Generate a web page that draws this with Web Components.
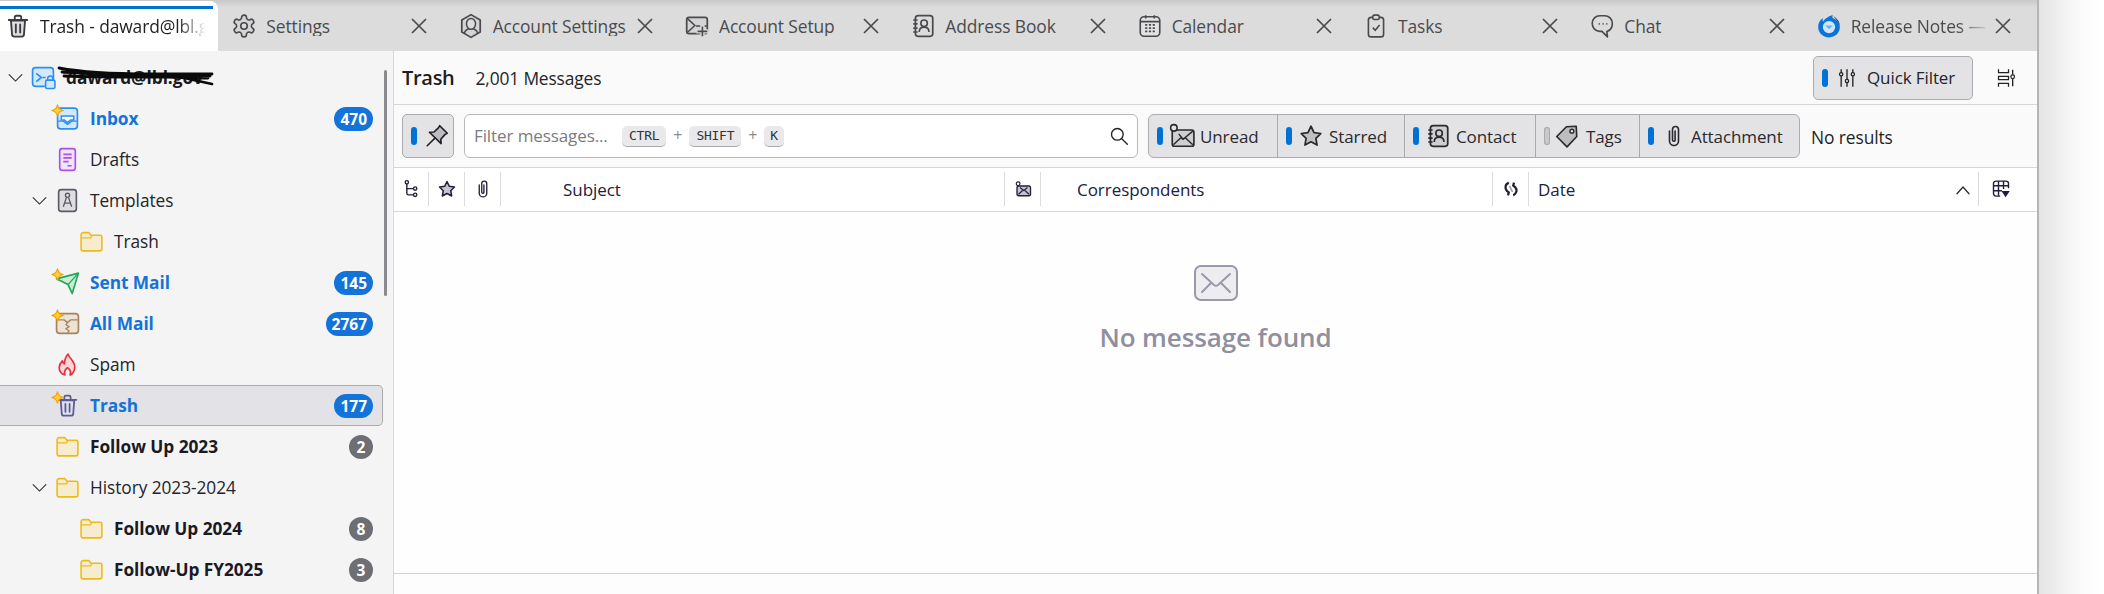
<!DOCTYPE html>
<html lang="en"><head><meta charset="utf-8"><title>Thunderbird</title>
<style>html,body{margin:0;height:100%;background:#fff;overflow:hidden}body{font:17px/1.2 "Open Sans","Noto Sans",sans-serif;color:#1a1a1f}</style>
</head><body><tb-app></tb-app>
<script>
const book=(s='#444',f='#e6e6e9')=>`<rect x="5" y="2.500" width="16" height="19" rx="2.500" fill="${f}" stroke="${s}" stroke-width="1.600"/><path d="M3 6.500h4M3 10h4M3 14h4M3 17.500h4" stroke="${s}" stroke-width="1.500"/><circle cx="13" cy="9.500" r="3" fill="none" stroke="${s}" stroke-width="1.500"/><path d="M8.500 17.500c0-3 2-4.500 4.500-4.500s4.500 1.500 4.500 4.500" fill="none" stroke="${s}" stroke-width="1.500"/>`;
const star=(s,f,w=1.6)=>`<path d="M12 3l2.800 5.800 6.200.9-4.500 4.400 1.100 6.300L12 17.400l-5.600 3 1.100-6.300L3 9.700l6.200-.9z" fill="${f}" stroke="${s}" stroke-width="${w}" stroke-linejoin="round"/>`;
const clip=(s)=>`<path d="M7.500 7v10a4.500 4.500 0 0 0 9 0V5.500a3 3 0 0 0-6 0V16a1.300 1.300 0 0 0 2.600 0V7" fill="none" stroke="${s}" stroke-width="1.600" stroke-linecap="round"/>`;
const bin=(s,f)=>`<path d="M5.500 7l1 13a2 2 0 0 0 2 1.800h7a2 2 0 0 0 2-1.800l1-13z" fill="${f}" stroke="${s}" stroke-width="1.700"/><path d="M3.500 6.500h17M9 6V4a1.500 1.500 0 0 1 1.500-1.500h3A1.500 1.500 0 0 1 15 4v2M10 10.500v7.500M14 10.500v7.500" fill="none" stroke="${s}" stroke-width="1.700" stroke-linecap="round"/>`;
const ICONS={
trash:bin('#3c3c40','#dedee0'),
gear:`<path d="M12.220 2h-.44a2 2 0 0 0-2 2v.18a2 2 0 0 1-1 1.730l-.43.25a2 2 0 0 1-2 0l-.15-.08a2 2 0 0 0-2.730.73l-.22.38a2 2 0 0 0 .73 2.730l.15.1a2 2 0 0 1 1 1.720v.51a2 2 0 0 1-1 1.740l-.15.09a2 2 0 0 0-.73 2.730l.22.38a2 2 0 0 0 2.730.73l.15-.08a2 2 0 0 1 2 0l.43.25a2 2 0 0 1 1 1.730V20a2 2 0 0 0 2 2h.44a2 2 0 0 0 2-2v-.18a2 2 0 0 1 1-1.730l.43-.25a2 2 0 0 1 2 0l.15.08a2 2 0 0 0 2.730-.73l.22-.39a2 2 0 0 0-.73-2.730l-.15-.08a2 2 0 0 1-1-1.740v-.5a2 2 0 0 1 1-1.740l.15-.09a2 2 0 0 0 .73-2.730l-.22-.38a2 2 0 0 0-2.730-.73l-.15.08a2 2 0 0 1-2 0l-.43-.25a2 2 0 0 1-1-1.730V4a2 2 0 0 0-2-2z" fill="#d4d4d6" stroke="#4a4a4e" stroke-width="1.500"/><circle cx="12" cy="12" r="3" fill="#dcdcdc" stroke="#4a4a4e" stroke-width="1.500"/>`,
account:`<path d="M12 1.500 20.500 6.500v11L12 22.500 3.500 17.500v-11z" fill="#d4d4d6" stroke="#4a4a4e" stroke-width="1.600" stroke-linejoin="round"/><ellipse cx="12" cy="10" rx="4.200" ry="5" fill="#dcdcdc" stroke="#4a4a4e" stroke-width="1.400"/><path d="M6 19c0-3 2.500-4 4-4.500M18 19c0-3-2.500-4-4-4.500" fill="none" stroke="#4a4a4e" stroke-width="1.400"/>`,
setup:`<rect x="2.500" y="4" width="19" height="15" rx="2" fill="#d4d4d6" stroke="#4a4a4e" stroke-width="1.600"/><path d="M3 5l7 6.500-7 6.500M11 12h10" fill="none" stroke="#4a4a4e" stroke-width="1.400"/><path d="M17 11v12M11.500 17h11" stroke="#dcdcdc" stroke-width="4"/><path d="M17 12.500v9M12.500 17h9" stroke="#4a4a4e" stroke-width="1.500"/>`,
book:book('#4a4a4e','#dcdcdc'),
calendar:`<rect x="3" y="3.500" width="18" height="18" rx="3.500" fill="#e2e2e3" stroke="#4a4a4e" stroke-width="1.500"/><path d="M3 8h18M8 2v3M16 2v3" stroke="#4a4a4e" stroke-width="1.500"/><path d="M7.500 11h9M7.500 14h9M7.500 17h9" stroke="#4a4a4e" stroke-width="1.700" stroke-dasharray="2 1.500"/>`,
tasks:`<rect x="5" y="4" width="14" height="18" rx="2.500" fill="#dcdcdc" stroke="#4a4a4e" stroke-width="1.500"/><rect x="9" y="2" width="6" height="4" rx="1.500" fill="#dcdcdc" stroke="#4a4a4e" stroke-width="1.500"/><path d="M9 13.500l2.300 2.500 4-5" fill="none" stroke="#4a4a4e" stroke-width="1.400"/>`,
chat:`<path d="M10 2.500h4.500a7 7 0 0 1 7 7v1a7 7 0 0 1-5 6.500l.5 5-5-5h-2a7 7 0 0 1-7-7v-.5a7 7 0 0 1 7-7z" fill="#dcdcdc" stroke="#4a4a4e" stroke-width="1.500" stroke-linejoin="round"/><path d="M9 10h1M12.500 10h1M16 10h1" stroke="#4a4a4e" stroke-width="1.600"/>`,
tb:`<path d="M12 22.500c-5.800 0-10-4.200-10-9.800C2 9 4 6 6.500 4.500 6 6 6 7 6.500 8 8 5 12 3 15.500 1.500 15 3 15 4 15.500 4.500 19 6 22 9 22 13c0 5.500-4.300 9.500-10 9.500z" fill="#0d73d8"/><path d="M16 3c3.500 2 6 5 6 9-1-3-3-6-6-9z" fill="#0a3f9e"/><circle cx="12" cy="13" r="5.700" fill="#cfe5fa"/><path d="M8.500 11.500L12 15l3.500-3.500" fill="#6eb1ee"/>`,
pin:`<path d="M14.500 2.500l7 7-2 1-4 4.500.3 4L5 8.500l4.200-.2 4.300-4z" fill="#bdbdc0" stroke="#1f1f24" stroke-width="1.500" stroke-linejoin="round"/><path d="M9.500 14.500L3 21" stroke="#1f1f24" stroke-width="1.500" stroke-linecap="round"/>`,
search:`<circle cx="10" cy="10" r="7" fill="none" stroke="#222" stroke-width="1.600"/><path d="M15.300 15.300L22 22" stroke="#222" stroke-width="1.600" stroke-linecap="round"/>`,
unread:`<rect x="3" y="6.500" width="20" height="15" rx="2" fill="#cfcfd2" stroke="#2a2a2e" stroke-width="1.500"/><path d="M4 20l7-6.500 2 1.500 2-1.500 7 6.500M13 15l9-7.500M9 10l4 5" fill="none" stroke="#2a2a2e" stroke-width="1.300"/><circle cx="4.500" cy="4.500" r="3" fill="#e3e3e6" stroke="#2a2a2e" stroke-width="1.400"/>`,
star:star('#2a2a2e','#c0c0c2'),
contact:book('#2a2a2e','#cfcfd2'),
tag:`<path d="M2.500 12.500L11.500 3.500l9-.5.5 9.500-9 9.500z" fill="#bdbdc0" stroke="#2a2a2e" stroke-width="1.500" stroke-linejoin="round"/><circle cx="16.500" cy="7.500" r="1.800" fill="#e3e3e6" stroke="#2a2a2e" stroke-width="1.300"/>`,
clip:clip('#2a2a2e'),
sliders:`<path d="M5 2v3M5 10v12M12 2v11M12 18v4M19 2v3M19 10v12" stroke="#222" stroke-width="1.600" stroke-linecap="round"/><circle cx="5" cy="7.500" r="2" fill="none" stroke="#222" stroke-width="1.500"/><circle cx="12" cy="15.500" r="2" fill="none" stroke="#222" stroke-width="1.500"/><circle cx="19" cy="7.500" r="2" fill="none" stroke="#222" stroke-width="1.500"/>`,
layout:`<path d="M3 1.500v4h12v-4M3 22.500v-4h12v4M3 10h12v4H3z" fill="none" stroke="#222" stroke-width="1.500"/><path d="M20 2v6M20 13v9" stroke="#222" stroke-width="1.600"/><circle cx="20" cy="10.500" r="2.200" fill="none" stroke="#222" stroke-width="1.500"/>`,
tree:`<path d="M7 6v11a2 2 0 0 0 2 2h6M7 11.500h8" fill="none" stroke="#20203a" stroke-width="1.700"/><circle cx="7" cy="4" r="2" fill="none" stroke="#20203a" stroke-width="1.600"/><circle cx="17" cy="11.500" r="2" fill="none" stroke="#20203a" stroke-width="1.600"/><circle cx="17" cy="19" r="2" fill="none" stroke="#20203a" stroke-width="1.600"/>`,
hstar:star('#20203a','#c5c5d2',1.800),
hclip:clip('#20203a'),
hmail:`<rect x="4" y="8" width="18" height="13" rx="2" fill="#c5c5d2" stroke="#20203a" stroke-width="1.800"/><path d="M6 19l5.500-5M20 19l-5.500-5M8 10l5 4 5-4" fill="none" stroke="#20203a" stroke-width="1.600"/><circle cx="5.500" cy="5" r="2.500" fill="#fff" stroke="#20203a" stroke-width="1.600"/>`,
hstatus:`<path d="M9 3.500c-5 2.500-5.500 8-2.500 11l2.500 2-1 4" fill="none" stroke="#20203a" stroke-width="3"/><path d="M15 20.500c5-2.500 5.500-8 2.500-11l-2.500-2 1-4" fill="none" stroke="#20203a" stroke-width="3"/><path d="M10 8l4 8" stroke="#999" stroke-width="2.200"/>`,
chevup:`<path d="M4 17l8-9 8 9" fill="none" stroke="#2a2a30" stroke-width="1.700" stroke-linecap="round"/>`,
picker:`<path d="M11 20.500H6a3 3 0 0 1-3-3v-12a3 3 0 0 1 3-3h12a3 3 0 0 1 3 3V11" fill="#fff" stroke="#20203a" stroke-width="1.700"/><path d="M3 8h18M3 14h10M9 2.500V20M15 2.500V12" stroke="#20203a" stroke-width="1.700"/><path d="M12.500 14.500h10L17.500 22z" fill="#20203a"/>`,
chevdown:`<path d="M3 8l9 9 9-9" fill="none" stroke="#2a2a30" stroke-width="1.500" stroke-linecap="round"/>`,
f_account:`<rect x="1.500" y="2.500" width="20" height="18" rx="3" fill="#d4e8fc" stroke="#2b8ff0" stroke-width="1.600"/><path d="M5 8l5 4-5 4" fill="none" stroke="#2b8ff0" stroke-width="1.600"/><path d="M11 12h3" stroke="#2b8ff0" stroke-width="1.400"/><rect x="14" y="14.500" width="9" height="8" rx="1.500" fill="#d4e8fc" stroke="#2b8ff0" stroke-width="1.500"/><path d="M16 14.500v-1.500a2.500 2.500 0 0 1 5 0v1.500" fill="none" stroke="#2b8ff0" stroke-width="1.500"/>`,
f_inbox:`<rect x="2.500" y="2" width="19" height="20" rx="3" fill="#d4e8fc" stroke="#2b8ff0" stroke-width="1.600"/><path d="M6 9.500h12v4h-3l-3 2.500-3-2.500H6z" fill="#f4f9ff" stroke="#2b8ff0" stroke-width="1.400"/><path d="M3 14.500h5l4 3 4-3h5" fill="none" stroke="#2b8ff0" stroke-width="1.400"/>`,
f_drafts:`<rect x="4.500" y="1.500" width="15" height="21" rx="2.500" fill="#efe3fd" stroke="#a950ee" stroke-width="1.600"/><path d="M8 7h8M8 10.500h8M8 14h5M12 18h4" stroke="#a950ee" stroke-width="1.600"/>`,
f_templates:`<rect x="3.500" y="1.500" width="17" height="21" rx="2.500" fill="#dedee2" stroke="#5b5b66" stroke-width="1.600"/><circle cx="12" cy="7" r="2" fill="none" stroke="#5b5b66" stroke-width="1.300"/><path d="M11 9l-3 9M13 9l3 9M9 14.500h6" fill="none" stroke="#5b5b66" stroke-width="1.300"/>`,
f_folder:`<path d="M2 7V5.500A2 2 0 0 1 4 3.500h5.500l2 2.500H20a2 2 0 0 1 2 2v11a2 2 0 0 1-2 2H4a2 2 0 0 1-2-2z" fill="#f6edcf" stroke="#f0b91a" stroke-width="1.500" stroke-linejoin="round"/><path d="M2 8.500h9l1.500-2.500" fill="none" stroke="#f0b91a" stroke-width="1.300"/>`,
f_sent:`<path d="M1.500 8.500L22.500 3 16.500 22.500 12.500 14z" fill="#c9eed4" stroke="#22a559" stroke-width="1.600" stroke-linejoin="round"/><path d="M12.500 14L22 3.500" stroke="#22a559" stroke-width="1.300"/>`,
f_all:`<rect x="1.500" y="2.500" width="21" height="19" rx="3" fill="#ece2d6" stroke="#a5855d" stroke-width="1.600"/><path d="M2 8.500h7l3 2.500 3-2.500h7" fill="none" stroke="#a5855d" stroke-width="1.400"/><path d="M12 11l-1.500 2 3 2-3 2 3 2-1.500 2" fill="none" stroke="#a5855d" stroke-width="1.200"/>`,
f_spam:`<path d="M12.500 2c1 4 6.500 6.500 6.500 12.500 0 4.500-3 7.500-4.500 7.500.8-2 .3-5-2.500-7-2.500 2-3.200 5-2.500 7C7 22 4 19 4 15c0-3 1.500-5 3-6.500.3 1.500 1 2.500 2 3 0-4 1.500-7 3.500-9.500z" fill="#fbd6d6" stroke="#e5303c" stroke-width="1.600" stroke-linejoin="round"/>`,
f_trash:bin('#5d5b91','#e0dff0'),
envelope:`<rect x="1" y="1" width="42" height="34" rx="6" fill="#ededf0" stroke="#9a98a9" stroke-width="2"/><path d="M8 9l12 11q2 1.500 4 0L36 9M8 27l9-9M36 27l-9-9" fill="none" stroke="#9a98a9" stroke-width="2" stroke-linecap="round"/>`
};

customElements.define('tb-icon',class extends HTMLElement{
  connectedCallback(){ if(this.shadowRoot)return;
    const s=this.getAttribute('size')||24,h=this.getAttribute('h')||s,vb=this.getAttribute('vb')||'0 0 24 24';
    this.attachShadow({mode:'open'}).innerHTML=`<style>:host{display:inline-flex;flex:none;width:${s}px;height:${h}px}svg{display:block;width:100%;height:100%}</style><svg viewBox="${vb}" aria-hidden="true">${ICONS[this.getAttribute('name')]||''}</svg>`;
  }});

customElements.define('tb-tab',class extends HTMLElement{
  connectedCallback(){ if(this.shadowRoot)return;
    const sel=this.hasAttribute('selected');
    this.attachShadow({mode:'open'}).innerHTML=`<style>
    :host{display:block;height:50px;min-width:0;padding-top:1px;color:${sel?'#222':'#4b4b4f'};font-size:17.400px}
    .in{display:flex;align-items:center;min-width:0;height:100%;box-sizing:border-box;padding:0 3px 0 5px}
    :host([selected]) .in{margin-right:8px;padding-right:0;background:linear-gradient(#0072d6,#0072d6) left 5px/calc(100% - 5px) 3px no-repeat,#fff;border-radius:0 8px 0 0}
    tb-icon{margin-right:9px}
    .t{flex:1;min-width:0;overflow:hidden;white-space:nowrap;letter-spacing:-.1px;padding-right:4px}
    :host([selected]) .t{-webkit-mask:linear-gradient(90deg,#000 calc(100% - 40px),transparent calc(100% - 12px));mask:linear-gradient(90deg,#000 calc(100% - 40px),transparent calc(100% - 12px));padding-right:0}
    :host([fade]) .t{-webkit-mask:linear-gradient(90deg,#000 calc(100% - 34px),transparent calc(100% - 2px));mask:linear-gradient(90deg,#000 calc(100% - 34px),transparent calc(100% - 2px))}
    .x{width:18px;height:18px;flex:none;margin-left:2px;margin-right:22px}
    </style><div class="in"><tb-icon name="${this.getAttribute('icon')}" size="26"></tb-icon><span class="t"><slot></slot></span>${sel?'':'<svg class="x" viewBox="0 0 18 18"><path d="M2 2l14 14M16 2L2 16" stroke="#4b4b4f" stroke-width="1.700" fill="none"/></svg>'}</div>`;
  }});

customElements.define('tb-folder',class extends HTMLElement{
  connectedCallback(){ if(this.shadowRoot)return;
    const l=+this.getAttribute('level')||0,b=this.getAttribute('badge'),ic=this.getAttribute('icon');
    this.attachShadow({mode:'open'}).innerHTML=`<style>
    :host{display:block;height:41px;font-size:17.300px;color:#24242a}
    .r{display:flex;align-items:center;height:100%;box-sizing:border-box;padding:0 9px 0 ${5+24*l}px;margin-right:10px;border:1px solid transparent;border-left:0;border-radius:0 5px 5px 0}
    :host([selected]) .r{background:#e3e3e7;border-color:#a9a9b0}
    :host([bold]) .n{font-weight:700;color:#1a1a1f}
    :host([new]) .n{font-weight:700;color:#1373d9}
    .tw{width:20px;height:20px;flex:none;display:flex;align-items:center;justify-content:center;margin-right:8px}
    .ic{position:relative;width:21px;height:22px;flex:none;margin-right:12px;display:flex;align-items:center;justify-content:center}
    .ic tb-icon{margin:-2px}
    .sp{position:absolute;left:-6px;top:-4px;width:13px;height:13px}
    .n{flex:1;white-space:nowrap;letter-spacing:-.05px;padding-top:1px}
    .b{height:24px;min-width:24px;box-sizing:border-box;padding:0 6px;border-radius:12px;background:#1373d9;color:#fff;font-weight:700;font-size:15.500px;line-height:24px;text-align:center}
    :host([bold]) .b{background:#6e6e75;padding:0}
    </style><div class="r"><span class="tw">${this.hasAttribute('open')?'<tb-icon name="chevdown" size="17"></tb-icon>':''}</span><span class="ic"><tb-icon name="${ic}" size="25"></tb-icon>${this.hasAttribute('new')?'<svg class="sp" viewBox="0 0 16 16"><path d="M8 1c.8 4 2.500 6 7 7-4.500 1-6.200 3-7 7-.8-4-2.500-6-7-7 4.500-1 6.200-3 7-7z" fill="#ffcf3a" stroke="#f0a400" stroke-width="1.500" stroke-linejoin="round"/></svg>':''}</span><span class="n"><slot></slot></span>${b?`<span class="b">${b}</span>`:''}</div>`;
  }});

customElements.define('tb-pill',class extends HTMLElement{
  connectedCallback(){ if(this.shadowRoot)return;
    this.attachShadow({mode:'open'}).innerHTML=`<style>:host{display:block;width:6px;height:18px;border-radius:3px;flex:none;background:#0072d6}:host([off]){background:#c9c9cc;box-shadow:inset 0 0 0 1px #aaa}</style>`;
  }});

customElements.define('tb-toggle',class extends HTMLElement{
  connectedCallback(){ if(this.shadowRoot)return;
    const w=this.getAttribute('w'),g=this.getAttribute('g')||9,t=this.getAttribute('t')||9,is=this.getAttribute('isize')||26;
    const off=this.hasAttribute('off');
    this.attachShadow({mode:'open'}).innerHTML=`<style>:host{display:flex;align-items:center;flex:none;width:${w}px;box-sizing:border-box;padding-left:8px;border-left:1px solid #a9a9b0;font-size:17px;color:#2a2a2e;letter-spacing:-.1px}:host(:first-child){border-left:0}
    tb-icon{margin-left:${g}px;margin-right:${t}px}.l{padding-top:2px}</style><tb-pill ${off?'off':''}></tb-pill><tb-icon name="${this.getAttribute('icon')}" size="${is}"></tb-icon><span class="l"><slot></slot></span>`;
  }});

customElements.define('tb-kbd',class extends HTMLElement{
  connectedCallback(){ if(this.shadowRoot)return;
    this.attachShadow({mode:'open'}).innerHTML=`<style>:host{display:inline-block;height:21px;box-sizing:border-box;padding:0 7px;border-radius:5px;background:#e9e9ec;border-bottom:1.500px solid #a9a9ad;font:500 13px/20px "DejaVu Sans Mono","Liberation Mono",monospace;color:#333;letter-spacing:-.25px}:host([k]){padding:0 6px}</style><slot></slot>`;
  }});

customElements.define('tb-col',class extends HTMLElement{
  connectedCallback(){ if(this.shadowRoot)return;
    const ic=this.getAttribute('icon');
    this.attachShadow({mode:'open'}).innerHTML=`<style>:host{display:flex;align-items:center;justify-content:center;margin:4px 0 5px;border-left:1px solid #dcdcdf;font-size:17px;color:#20203a;min-width:0;letter-spacing:-.05px}:host(:first-child){border-left:0}
    :host([text]){justify-content:flex-start;padding-left:var(--pl,36px);padding-top:2px;box-sizing:border-box}</style>${ic?`<tb-icon name="${ic}" size="${this.getAttribute('isize')||20}"></tb-icon>`:''}<slot></slot>`;
  }});

customElements.define('tb-sidebar',class extends HTMLElement{
  connectedCallback(){ if(this.shadowRoot)return;
    this.attachShadow({mode:'open'}).innerHTML=`<style>:host{display:block;position:relative;width:393px;flex:none;background:#f4f4f5;border-right:1px solid #d9d9dc;padding-top:6px;overflow:hidden}
    .bar{position:absolute;left:384px;top:19px;width:3px;height:226px;background:#8b8b8f;border-radius:2px}</style><slot></slot><div class="bar"></div>`;
  }});

customElements.define('tb-account',class extends HTMLElement{
  connectedCallback(){ if(this.shadowRoot)return;
    this.attachShadow({mode:'open'}).innerHTML=`<style>:host{display:block;position:relative;height:41px}
    svg{position:absolute;left:50px;top:6px;width:170px;height:30px;pointer-events:none}</style>
    <tb-folder open icon="f_account" bold><slot></slot></tb-folder>
    <svg viewBox="0 0 170 30"><path d="M9 5C30 9 60 11 100 11S140 11 162 11M14 13C40 14 70 14 100 14S140 13 160 13M125 13L162 21M12 9C50 11 120 15 158 15" fill="none" stroke="#0a0a0a" stroke-width="2.800" stroke-linecap="round"/></svg>`;
  }});

customElements.define('tb-button',class extends HTMLElement{
  connectedCallback(){ if(this.shadowRoot)return;
    this.attachShadow({mode:'open'}).innerHTML=`<style>:host{display:flex;align-items:center;box-sizing:border-box;height:44px;background:#e3e3e6;border:1px solid #ababb0;border-radius:5px;padding-left:8px;font-size:17px;color:#24242a;letter-spacing:-.1px}</style><slot></slot>`;
  }});

customElements.define('tb-app',class extends HTMLElement{
  connectedCallback(){ if(this.shadowRoot)return;
    this.attachShadow({mode:'open'}).innerHTML=`<style>
    :host{display:flex;height:594px;width:2104px;color:#1a1a1f}
    .win{width:2037px;flex:none;display:flex;flex-direction:column;height:594px;background:#fff}
    .edge{width:2px;background:#b5b5b5;flex:none}
    .shade{flex:1;background:linear-gradient(90deg,#e4e4e4,#f8f8f8 36px,#fff 60px)}
    .tabs{display:grid;grid-template-columns:repeat(9,1fr);height:51px;flex:none;background:linear-gradient(#c8c8c8,#dcdcdc 7px);overflow:hidden}
    .body{flex:1;display:flex;min-height:0}
    .main{flex:1;display:flex;flex-direction:column;min-width:0}
    .head{height:54px;flex:none;box-sizing:border-box;display:flex;align-items:center;background:#fafafa;border-bottom:1px solid #d7d7da;padding:0 21px 0 8px}
    .title{font-size:20px;font-weight:600;letter-spacing:-.3px;margin-right:21px;color:#1c1c22;padding-top:1px}
    .count{font-size:17.400px;letter-spacing:-.15px;color:#24242a;padding-top:1px}
    .sp{flex:1}
    .qf{width:160px;margin-right:23px}
    .qf tb-icon{margin:0 10px 0 9px}
    .qf span{padding-top:2px}
    .bar{height:63px;flex:none;box-sizing:border-box;display:flex;align-items:center;background:#fafafa;border-bottom:1px solid #d7d7da;padding-left:8px}
    .pin{width:52px;margin-right:10px}.pin tb-icon{margin-left:7px}
    .search{width:674px;height:44px;box-sizing:border-box;background:#fff;border:1px solid #b8b8bc;border-radius:6px;display:flex;align-items:center;padding:0 8px 0 9px;margin-right:10px;font-size:17px;color:#7b7b80;letter-spacing:-.1px}
    .search .ph{width:148px;white-space:nowrap;padding-top:1px}
    .plus{margin:0 7px;color:#8c8c90;font-size:16px}
    .group{display:flex;width:652px;height:44px;box-sizing:border-box;background:#e3e3e6;border:1px solid #ababb0;border-radius:6px;margin-right:11px}
    .res{font-size:17.400px;color:#1f1f24;letter-spacing:-.1px;padding-top:2px}
    .cols{height:44px;flex:none;box-sizing:border-box;display:grid;grid-template-columns:34px 36px 36px 504px 36px 452px 36px 450px 1fr;background:#fff;border-bottom:1.500px solid #d7d7da}
    .date{justify-content:space-between}
    .pick{justify-content:flex-start;padding-left:12px}
    .empty{flex:1;display:flex;flex-direction:column;align-items:center;padding-top:53px;box-sizing:border-box;background:#fefefe}
    .msg{margin-top:19px;font-size:26px;font-weight:600;color:#8f8f9d;letter-spacing:-.1px;line-height:34px}
    .foot{height:21px;flex:none;background:#fdfdfd;border-top:1.500px solid #d2d2d5;box-sizing:border-box}
    </style>
    <div class="win">
      <div class="tabs">
        <tb-tab selected icon="trash">Trash - daward@lbl.gov</tb-tab>
        <tb-tab icon="gear">Settings</tb-tab>
        <tb-tab icon="account">Account Settings</tb-tab>
        <tb-tab icon="setup">Account Setup</tb-tab>
        <tb-tab icon="book">Address Book</tb-tab>
        <tb-tab icon="calendar">Calendar</tb-tab>
        <tb-tab icon="tasks">Tasks</tb-tab>
        <tb-tab icon="chat">Chat</tb-tab>
        <tb-tab fade icon="tb">Release Notes —</tb-tab>
      </div>
      <div class="body">
        <tb-sidebar>
          <tb-account>daward@lbl.gov</tb-account>
          <tb-folder level="1" icon="f_inbox" new badge="470">Inbox</tb-folder>
          <tb-folder level="1" icon="f_drafts">Drafts</tb-folder>
          <tb-folder level="1" open icon="f_templates">Templates</tb-folder>
          <tb-folder level="2" icon="f_folder">Trash</tb-folder>
          <tb-folder level="1" icon="f_sent" new badge="145">Sent Mail</tb-folder>
          <tb-folder level="1" icon="f_all" new badge="2767">All Mail</tb-folder>
          <tb-folder level="1" icon="f_spam">Spam</tb-folder>
          <tb-folder level="1" icon="f_trash" new selected badge="177">Trash</tb-folder>
          <tb-folder level="1" icon="f_folder" bold badge="2">Follow Up 2023</tb-folder>
          <tb-folder level="1" open icon="f_folder">History 2023-2024</tb-folder>
          <tb-folder level="2" icon="f_folder" bold badge="8">Follow Up 2024</tb-folder>
          <tb-folder level="2" icon="f_folder" bold badge="3">Follow-Up FY2025</tb-folder>
        </tb-sidebar>
        <div class="main">
          <div class="head">
            <span class="title">Trash</span><span class="count">2,001 Messages</span><span class="sp"></span>
            <tb-button class="qf"><tb-pill></tb-pill><tb-icon name="sliders" size="20"></tb-icon><span>Quick Filter</span></tb-button>
            <tb-icon name="layout" size="20"></tb-icon>
          </div>
          <div class="bar">
            <tb-button class="pin"><tb-pill></tb-pill><tb-icon name="pin" size="26"></tb-icon></tb-button>
            <div class="search"><span class="ph">Filter messages...</span><tb-kbd>CTRL</tb-kbd><span class="plus">+</span><tb-kbd>SHIFT</tb-kbd><span class="plus">+</span><tb-kbd k>K</tb-kbd><span class="sp"></span><tb-icon name="search" size="20"></tb-icon></div>
            <div class="group">
              <tb-toggle w="128" icon="unread" g="6" t="5">Unread</tb-toggle>
              <tb-toggle w="127" icon="star" g="6" t="5">Starred</tb-toggle>
              <tb-toggle w="131" icon="contact" g="6" t="5">Contact</tb-toggle>
              <tb-toggle w="104" icon="tag" off g="4" t="6">Tags</tb-toggle>
              <tb-toggle w="160" icon="clip" isize="24" g="8" t="5">Attachment</tb-toggle>
            </div>
            <span class="res">No results</span>
          </div>
          <div class="cols">
            <tb-col icon="tree"></tb-col><tb-col icon="hstar"></tb-col><tb-col icon="hclip"></tb-col>
            <tb-col text style="--pl:62px">Subject</tb-col>
            <tb-col icon="hmail" isize="18"></tb-col>
            <tb-col text>Correspondents</tb-col>
            <tb-col icon="hstatus" isize="18"></tb-col>
            <tb-col text class="date" style="--pl:9px"><span>Date</span><tb-icon name="chevup" size="18" style="margin-right:6px"></tb-icon></tb-col>
            <tb-col class="pick" icon="picker"></tb-col>
          </div>
          <div class="empty"><tb-icon name="envelope" size="44" h="36" vb="0 0 44 36"></tb-icon><div class="msg">No message found</div></div>
          <div class="foot"></div>
        </div>
      </div>
    </div>
    <div class="edge"></div><div class="shade"></div>`;
  }});
</script></body></html>
